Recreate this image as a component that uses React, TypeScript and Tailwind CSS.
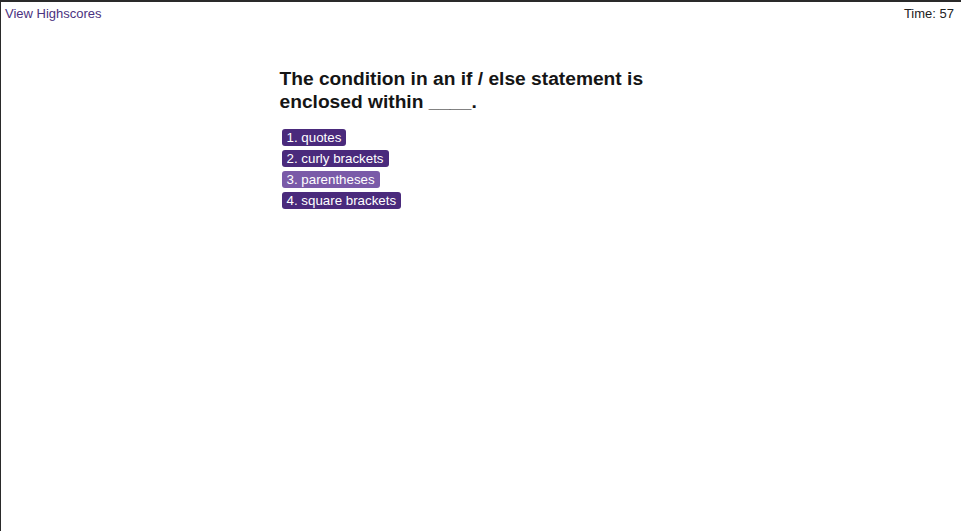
const ANSWERS = ['1. quotes', '2. curly brackets', '3. parentheses', '4. square brackets'];

export default function App() {
  return (
    <div className="min-h-[531px] bg-white border-t-2 border-l border-[#2a2a2a] font-['Liberation_Sans',Arial,sans-serif]">
      <header className="flex justify-between items-center pl-[4px] pr-[7px] pt-[4px] text-[13px] leading-[16px]">
        <a className="text-[#4b3280]">View Highscores</a>
        <span className="text-[#222]">Time: 57</span>
      </header>

      <main className="w-[403px] mx-auto pt-[45px]">
        <h1 className="text-[19.2px] leading-[23px] font-bold text-[#151515]">
          The condition in an if / else statement is enclosed within ____.
        </h1>
        <div className="flex flex-col items-start gap-[4px] mt-[16px] ml-[2px]">
          {ANSWERS.map((a, i) => (
            <button
              key={a}
              className={
                i === 2
                  ? 'h-[17px] px-[5px] rounded-[3px] text-[13.33px] leading-[17px] text-white bg-[#7a5aa8]'
                  : 'h-[17px] px-[5px] rounded-[3px] text-[13.33px] leading-[17px] text-white bg-[#4a2a7c]'
              }
            >
              {a}
            </button>
          ))}
        </div>
      </main>
    </div>
  );
}
